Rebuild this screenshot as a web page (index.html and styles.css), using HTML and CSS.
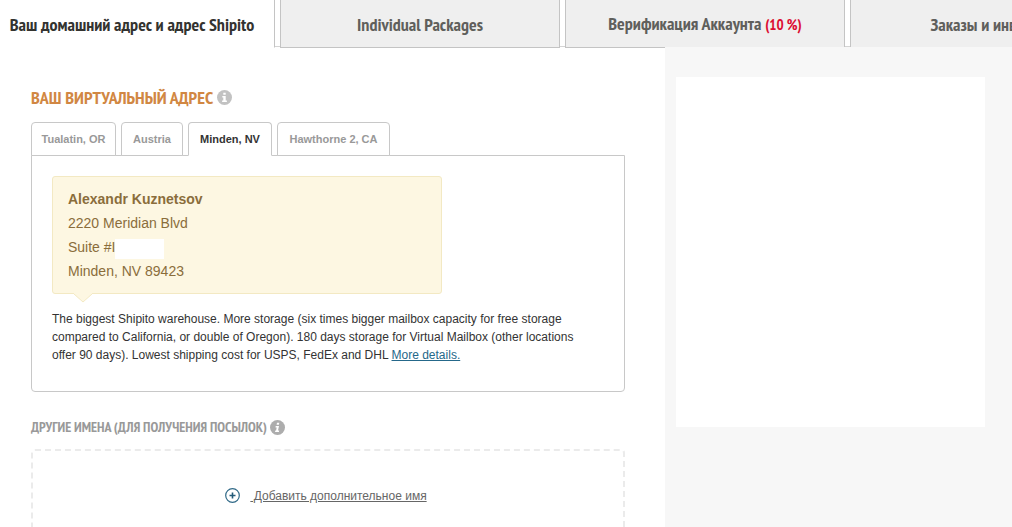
FILE: index.html
```html
<!DOCTYPE html>
<html lang="ru">
<head>
<meta charset="utf-8">
<meta name="viewport" content="width=device-width, initial-scale=1">
<title>Shipito</title>
<link rel="stylesheet" href="styles.css">
</head>
<body>
<nav class="top-tabs">
  <button type="button" class="top-tab top-tab-active">Ваш домашний адрес и адрес Shipito</button>
  <button type="button" class="top-tab">Individual Packages</button>
  <button type="button" class="top-tab">Верификация Аккаунта <span class="percent">(10 %)</span></button>
  <button type="button" class="top-tab">Заказы и инвойсы</button>
</nav>
<div class="layout">
  <main class="content">
    <h1 class="title">ВАШ ВИРТУАЛЬНЫЙ АДРЕС
      <svg class="info info-light" viewBox="0 0 15 15" aria-hidden="true"><circle cx="7.500" cy="7.500" r="7.500"/><path d="M6.300 2.800h2.400v2H6.300zM5.300 6h3.400v4.500h1.200V12H5.100v-1.500h1.200v-3h-1z" fill="#fff"/></svg>
    </h1>
    <div class="tabs">
      <button type="button" class="tab tab-tualatin">Tualatin, OR</button>
      <button type="button" class="tab tab-austria">Austria</button>
      <button type="button" class="tab tab-minden tab-active">Minden, NV</button>
      <button type="button" class="tab tab-hawthorne">Hawthorne 2, CA</button>
    </div>
    <section class="panel">
      <address class="address">
        <strong>Alexandr Kuznetsov</strong>
        <span>2220 Meridian Blvd</span>
        <span class="suite">Suite #I<i class="blank"></i></span>
        <span>Minden, NV 89423</span>
        <svg class="tail" viewBox="0 0 18 10" aria-hidden="true"><path d="M0 0h18v1L9 9 0 1z" fill="#fdf7e2"/><path d="M0 1l9 8 9-8" fill="none" stroke="#f3e9c3"/></svg>
      </address>
      <p class="about">The biggest Shipito warehouse. More storage (six times bigger mailbox capacity for free storage<br>compared to California, or double of Oregon). 180 days storage for Virtual Mailbox (other locations<br>offer 90 days). Lowest shipping cost for USPS, FedEx and DHL <a class="more" href="#">More details.</a></p>
    </section>
    <h2 class="subtitle">ДРУГИЕ ИМЕНА (ДЛЯ ПОЛУЧЕНИЯ ПОСЫЛОК)
      <svg class="info" viewBox="0 0 15 15" aria-hidden="true"><circle cx="7.500" cy="7.500" r="7.500"/><path d="M7 2.800h2.300l-.4 2H6.600zM5.700 6H9l-1 4.500h1.200L8.900 12H5l.3-1.500h.8L6.700 7.500h-1.200z" fill="#fff"/></svg>
    </h2>
    <section class="names">
      <svg class="plus" viewBox="0 0 15 15" aria-hidden="true"><circle cx="7.500" cy="7.500" r="6.800" fill="none" stroke="#316a88" stroke-width="1.200"/><path d="M7.500 4.500v6M4.500 7.500h6" stroke="#235a78" stroke-width="1.600"/></svg>
      <a class="add" href="#">&nbsp;Добавить дополнительное имя</a>
    </section>
  </main>
  <aside class="side"><div class="card"></div></aside>
</div>
</body>
</html>
```
FILE: styles.css
```css
* { box-sizing: border-box; }
body {
  margin: 0;
  min-height: 100vh;
  display: flex;
  flex-direction: column;
  background: #fff;
  color: #333;
  font-family: "Liberation Sans", Arial, sans-serif;
  font-size: 12px;
}
.top-tabs {
  display: flex;
  flex: none;
  gap: 5px;
  height: 47px;
  overflow-x: clip;
  overflow-y: visible;
  border-bottom: 1px solid #d4d4d4;
}
.top-tab {
  flex: 0 0 280px;
  height: 48px;
  padding: 2px 0 0;
  border: 1px solid #c4c4c4;
  border-top: 0;
  background: #efefef;
  color: #5f5f5c;
  font: bold 18px/20px "PT Sans Narrow", "Liberation Sans Narrow", sans-serif;
  white-space: nowrap;
}
.top-tab-active {
  flex-basis: 275px;
  padding-right: 10px;
  border-left: 0;
  border-bottom-color: #fff;
  background: #fff;
  color: #333330;
}
.percent { color: #dc0e32; font-size: 15px; }
.layout {
  flex: 1;
  display: grid;
  grid-template-columns: minmax(0, 1fr) 347px;
}
.content {
  display: flex;
  flex-direction: column;
  padding: 39px 40px 0 31px;
}
.title, .subtitle {
  display: flex;
  align-items: center;
  gap: 4px;
  margin: 0;
  font-family: "PT Sans Narrow", "Liberation Sans Narrow", sans-serif;
  white-space: nowrap;
}
.title { height: 22px; color: #d18743; font-size: 18px; }
.subtitle { height: 20px; margin-top: 25px; color: #999; font-size: 14px; gap: 3px; }
.info { width: 15px; height: 15px; fill: #adadad; }
.info-light { fill: #c2c2c2; }
.tabs {
  position: relative;
  z-index: 1;
  display: flex;
  gap: 5px;
  margin-top: 14px;
}
.tab {
  height: 34px;
  padding: 0;
  border: 1px solid #c8c8c8;
  border-radius: 4px 4px 0 0;
  background: #fff;
  color: #999;
  font: bold 11px/16px "Liberation Sans", Arial, sans-serif;
  white-space: nowrap;
}
.tab-tualatin { width: 85px; }
.tab-austria { width: 62px; }
.tab-minden { width: 84px; }
.tab-hawthorne { width: 113px; }
.tab-active { border-bottom-color: #fff; color: #333; }
.panel {
  min-height: 237px;
  margin-top: -1px;
  padding: 20px 20px 0;
  border: 1px solid #c8c8c8;
  border-radius: 0 0 4px 4px;
}
.address {
  position: relative;
  display: flex;
  flex-direction: column;
  width: 390px;
  padding: 10px 15px;
  border: 1px solid #f3e9c3;
  border-radius: 3px;
  background: #fdf7e2;
  color: #8a6d3b;
  font-size: 14px;
  font-style: normal;
  line-height: 24px;
}
.suite { display: flex; align-items: center; }
.blank { width: 49px; height: 20px; margin-top: 4px; background: #fff; }
.tail { position: absolute; left: 21px; top: 100%; width: 18px; height: 10px; }
.about { margin: 16px 0 0; line-height: 18px; white-space: nowrap; }
.more { color: #25688a; }
.names {
  flex: 1;
  display: flex;
  justify-content: center;
  align-items: flex-start;
  gap: 10px;
  min-height: 79px;
  margin-top: 12px;
  padding: 37px 4px 0 0;
  border: 2px dashed #ebebeb;
  border-bottom: 0;
  border-radius: 4px 4px 0 0;
}
.plus { width: 15px; height: 15px; }
.add { color: #666; line-height: 16px; }
.side { position: relative; padding: 30px 27px 0 11px; background: #f7f7f7; }
.card { height: 350px; background: #fff; }
```
